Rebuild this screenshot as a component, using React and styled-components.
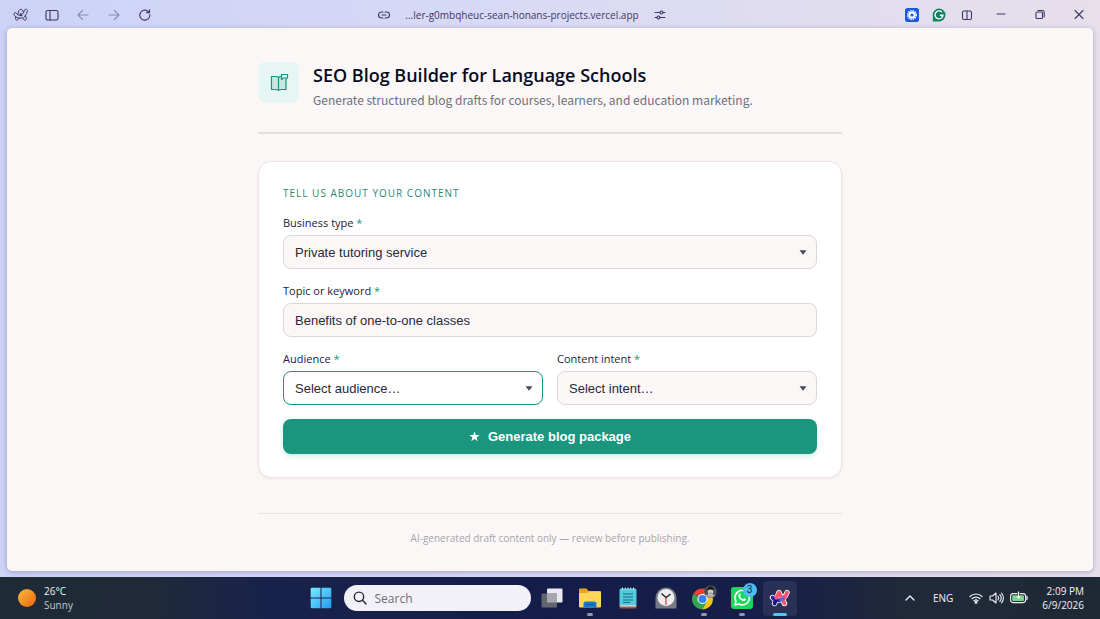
import React from "react";
import styled, { createGlobalStyle, css } from "styled-components";

const GlobalStyle = createGlobalStyle`
  *, *::before, *::after { box-sizing: border-box; }
  body {
    margin: 0;
    font-family: "Open Sans", "Noto Sans", sans-serif;
    color: #10142c;
  }
  button, input, select { font-family: "Liberation Sans", Arial, sans-serif; }
`;

/* ---------- Desktop and browser window ---------- */

const Desktop = styled.div`
  display: flex;
  flex-direction: column;
  min-height: 100vh;
`;

const BrowserWindow = styled.div`
  flex: 1;
  display: flex;
  flex-direction: column;
  padding: 0 7px 6px;
  background: linear-gradient(90deg, #cdd2f6 0%, #d8d9f6 45%, #e2deee 80%, #e7dfea 100%);
`;

const TitleBar = styled.header`
  display: flex;
  align-items: center;
  height: 28px;
  margin: 0 -5px 0 -2px;
  padding-top: 1px;
  color: #3b3965;
`;

const BarGroup = styled.nav`
  display: flex;
  align-items: center;
`;

const BarButton = styled.button`
  display: grid;
  place-items: center;
  width: ${(p) => p.$width || 31}px;
  height: 24px;
  padding: 0;
  border: 0;
  background: none;
  color: inherit;
  opacity: ${(p) => (p.disabled ? 0.45 : 1)};
`;

const Address = styled.div`
  flex: 1;
  display: flex;
  align-items: center;
  justify-content: center;
  gap: 15px;
  padding-right: 14px;
  font-size: 10px;
  line-height: 16px;
  white-space: nowrap;
`;

const Page = styled.main`
  flex: 1;
  display: flex;
  flex-direction: column;
  align-items: center;
  padding: 34px 24px 0;
  border-radius: 5px;
  background: #fbf7f6;
  box-shadow: 0 1px 5px rgba(70, 60, 120, 0.35);
`;

const Column = styled.div`
  width: 100%;
  max-width: 584px;
`;

/* ---------- Page content ---------- */

const Intro = styled.header`
  display: flex;
  gap: 14px;
  padding-bottom: 23px;
  border-bottom: 2px solid #e6e0dc;
`;

const Badge = styled.div`
  display: grid;
  place-items: center;
  width: 41px;
  height: 41px;
  border-radius: 8px;
  background: #e7f5f4;
`;

const Title = styled.h1`
  margin: 0;
  font-size: 18px;
  line-height: 26px;
  font-weight: 600;
  color: #080b1d;
`;

const Subtitle = styled.p`
  margin: 3px 0 0;
  font-family: "Noto Sans CJK SC", "Noto Sans", sans-serif;
  font-size: 12px;
  line-height: 18px;
  color: #6c7080;
`;

const Card = styled.form`
  display: flex;
  flex-direction: column;
  gap: 14px;
  margin-top: 27px;
  padding: 24px 24px 23px;
  border: 1px solid #ece5e4;
  border-radius: 13px;
  background: #ffffff;
  box-shadow: 0 1px 3px rgba(40, 20, 20, 0.06);
`;

const CardTitle = styled.h2`
  margin: 0;
  font-size: 10px;
  line-height: 15px;
  font-weight: 500;
  letter-spacing: 1px;
  text-transform: uppercase;
  color: #2b8773;
`;

const FieldRow = styled.div`
  display: grid;
  grid-template-columns: 1fr 1fr;
  gap: 14px;
`;

const Field = styled.div`
  display: flex;
  flex-direction: column;
  gap: 4px;
`;

const Label = styled.label`
  font-size: 11px;
  line-height: 16px;
  font-weight: 500;
  color: #20243c;
`;

const Required = styled.span`
  color: #1a957e;
`;

const control = css`
  width: 100%;
  height: 34px;
  padding: 0 11px;
  border: 1px solid ${(p) => (p.$active ? "#1a957e" : "#e0d6d4")};
  border-radius: 8px;
  background: ${(p) => (p.$active ? "#ffffff" : "#fbf7f6")};
  font-size: 13px;
  color: #262a3c;
  outline: none;
`;

const TextInput = styled.input`
  ${control}
`;

const Select = styled.select`
  ${control}
  appearance: none;
`;

const SelectBox = styled.div`
  position: relative;
`;

const Caret = styled.svg`
  position: absolute;
  top: 15px;
  right: 10px;
  pointer-events: none;
`;

const SubmitButton = styled.button`
  display: flex;
  align-items: center;
  justify-content: center;
  gap: 8px;
  height: 35px;
  border: 0;
  border-radius: 8px;
  background: #1a957e;
  box-shadow: 0 2px 5px rgba(26, 149, 126, 0.22);
  font-size: 13px;
  font-weight: 700;
  color: #ffffff;
`;

const Note = styled.footer`
  margin: 35px 0 24px;
  padding-top: 16px;
  border-top: 1px solid #e8e2e0;
  font-size: 10px;
  line-height: 16px;
  text-align: center;
  color: #a6a5ae;
`;

/* ---------- Taskbar ---------- */

const Taskbar = styled.footer`
  display: grid;
  grid-template-columns: 1fr auto 1fr;
  align-items: center;
  height: 42px;
  background: linear-gradient(90deg, #1e2a36 0%, #202a38 13%, #18234b 24%, #141d49 50%, #161f48 70%, #202939 82%, #1e2935 100%);
  color: #f2f3f6;
  font-size: 10px;
  line-height: 14px;
`;

const Weather = styled.div`
  display: flex;
  align-items: center;
  gap: 8px;
  padding-left: 18px;
`;

const Muted = styled.div`
  color: #c3c7cd;
`;

const Dock = styled.div`
  display: flex;
  align-items: center;
  gap: 4px;
`;

const AppButton = styled.button`
  position: relative;
  display: grid;
  place-items: center;
  width: 34px;
  height: 35px;
  padding: 0;
  border: 0;
  border-radius: 4px;
  background: ${(p) => (p.$state === "active" ? "rgba(255, 255, 255, 0.08)" : "none")};

  &::after {
    content: "";
    position: absolute;
    bottom: 0;
    display: ${(p) => (p.$state ? "block" : "none")};
    width: ${(p) => (p.$state === "active" ? 14 : 6)}px;
    height: 3px;
    border-radius: 2px;
    background: ${(p) => (p.$state === "active" ? "#55c3f7" : "#9298ac")};
  }
`;

const SearchBox = styled.label`
  display: flex;
  align-items: center;
  gap: 8px;
  width: 187px;
  height: 26px;
  margin-left: 2px;
  padding: 0 9px;
  border-radius: 13px;
  background: #f2f1f8;
`;

const SearchInput = styled.input`
  min-width: 0;
  flex: 1;
  padding: 0;
  border: 0;
  outline: 0;
  background: none;
  font-family: "Open Sans", "Noto Sans", sans-serif;
  font-size: 12px;

  &::placeholder { color: #6e6e76; opacity: 1; }
`;

const Count = styled.span`
  position: absolute;
  top: 2px;
  right: 2px;
  width: 14px;
  height: 14px;
  border-radius: 50%;
  background: #4cbcf2;
  color: #10284a;
  font-size: 10px;
  line-height: 14px;
  text-align: center;
`;

const Tray = styled.div`
  display: flex;
  align-items: center;
  justify-content: flex-end;
  gap: 6px;
  padding-right: 16px;
`;

const Language = styled.span`
  margin: 0 10px 0 12px;
`;

const Clock = styled.div`
  margin-left: 8px;
  text-align: right;
`;

/* ---------- Icons ---------- */

const Line = ({ size = 14, width, children, weight = 1.1, color = "currentColor" }) => (
  <svg width={width || size} height={size} viewBox={`0 0 ${width || size} ${size}`} fill="none" stroke={color}
    strokeWidth={weight} strokeLinecap="round" strokeLinejoin="round" aria-hidden="true">
    {children}
  </svg>
);

const ArcOutline = () => (
  <Line size={14} width={16} weight={1}>
    <path d="M6.2 2.2c.7-1.3 2.5-1.3 3.1 0l1.2 2.5c.4-.7.7-1.4.8-2.2.2-.9 1-1.4 1.9-1.2.9.2 1.4 1 1.2 1.9a10 10 0 0 1-2.2 4.4l1.2 2.5c.7 1.6-1.8 2.9-2.8 1.3l-.9-1.7c-1.2.5-2.5.6-3.8.3l-.7 1.4c-.8 1.5-3.2.5-2.7-1.2l.5-1.2C1.9 8.3 1.2 7.4.9 6.5c-.5-1.6 1.8-2.5 2.6-1.1.2.4.5.7.8 1z" />
    <path d="M4.3 6.4c1.9 1.8 5 .8 6.2-1.7M3 9c1.1.7 2.2.9 2.9 1M7.7 5.5l-1 2 2 .2zM10.7 9.7c.6-.5 1.2-1.2 1.7-2.1" />
  </Line>
);
const SidebarIcon = () => (
  <Line><rect x="1" y="2.5" width="12" height="9.5" rx="1.7" /><path d="M5 2.5V12" /></Line>
);
const BackIcon = () => <Line size={12}><path d="M11 6H1M5.5 1.5 1 6l4.5 4.5" /></Line>;
const ForwardIcon = () => <Line size={12}><path d="M1 6h10M6.5 1.5 11 6l-4.5 4.5" /></Line>;
const ReloadIcon = () => (
  <Line size={12}><path d="M10.8 5.5a5 5 0 1 1-2-3.4l1.5 1.3M10.5.7v2.9H7.6" /></Line>
);
const LinkIcon = () => (
  <Line size={12}><path d="M5 3H3.5a3 3 0 0 0 0 6H5M7 3h1.5a3 3 0 0 1 0 6H7M4 6h4" /></Line>
);
const TuneIcon = () => (
  <Line size={12}><path d="M1 3.5h5M9 3.5h2M1 8.5h2M6 8.5h5" /><circle cx="7.5" cy="3.5" r="1.5" /><circle cx="4.5" cy="8.5" r="1.5" /></Line>
);
const FlowerIcon = () => (
  <svg width="14" height="14" viewBox="0 0 14 14" aria-hidden="true">
    <rect width="14" height="14" rx="2.5" fill="#195bdc" />
    <circle cx="7" cy="7" r="3.6" fill="#fff" />
    <circle cx="7" cy="7" r="4.2" fill="none" stroke="#fff" strokeWidth="1.6" strokeDasharray="1.4 .8" />
    <circle cx="7" cy="7" r="1.6" fill="#195bdc" />
  </svg>
);
const GrammarIcon = () => (
  <svg width="14" height="14" viewBox="0 0 14 14" fill="none" aria-hidden="true">
    <path d="M7 .5A6.5 6.5 0 1 1 7 13.5H.8V7A6.3 6.3 0 0 1 7 .5Z" fill="#0c8463" />
    <path d="M9.8 4A4 4 0 1 0 11 7.3H7.8M11 7.3 9.5 9.4" stroke="#fff" strokeWidth="1.4" />
  </svg>
);
const SplitIcon = () => (
  <Line size={12}><rect x="1.5" y="2" width="9" height="8.5" rx="1.5" /><path d="M6 2v8.5" /></Line>
);
const MinimizeIcon = () => <Line size={12}><path d="M2 5h8" /></Line>;
const RestoreIcon = () => (
  <Line size={12}><rect x="2" y="3" width="6.5" height="6.5" rx="1" /><path d="M4 1.5h4.5A1.8 1.8 0 0 1 10.2 3.2V8" /></Line>
);
const CloseIcon = () => <Line size={12}><path d="m2 1.5 8 8m0-8-8 8" /></Line>;

const BookIcon = () => (
  <Line size={20} color="#1a957e" weight={1.2}>
    <path d="M2.5 3.500h4q2 0 3 1 1-1 3-1h4.500v13h-4.500q-2 0-3 .8-1-.8-3-.8h-4z" fill="#c6e8e1" />
    <path d="M9.500 4.500v12.800" />
    <path d="M12.500 6.500V1.500h6v3.500h-4z" fill="#e7f5f4" />
  </Line>
);
const CaretIcon = () => (
  <Caret width="8" height="5" viewBox="0 0 8 5" aria-hidden="true"><path d="M.5.3h7L4 4.7z" fill="#454861" /></Caret>
);
const StarIcon = () => (
  <svg width="11" height="11" viewBox="0 0 11 11" fill="currentColor" aria-hidden="true">
    <path d="m5.5.3 1.3 3.600 3.900.1-3.100 2.400 1.100 3.800-3.200-2.200-3.200 2.200 1.100-3.800L.3 4l3.900-.1z" />
  </svg>
);
const SunIcon = () => (
  <svg width="18" height="18" viewBox="0 0 18 18" aria-hidden="true">
    <defs><linearGradient id="sun" x1="0" y1="0" x2="1" y2="1"><stop stopColor="#f7bd3b" /><stop offset="1" stopColor="#ee6510" /></linearGradient></defs>
    <circle cx="9" cy="9" r="9" fill="url(#sun)" />
  </svg>
);
const StartIcon = () => (
  <svg width="22" height="22" viewBox="0 0 22 22" aria-hidden="true">
    <defs><linearGradient id="start" x1="0" y1="0" x2="1" y2="1"><stop stopColor="#7deaff" /><stop offset="1" stopColor="#1f9df1" /></linearGradient></defs>
    <path d="M1.500.700h9v9.800H.700v-9zM11.500.700h9l.8.800v9h-9.800zM.700 11.500h9.800v9.800h-9l-.8-.8zM11.500 11.500h9.800v9l-.8.800h-9z" fill="url(#start)" />
  </svg>
);
const SearchIcon = () => (
  <Line size={14} weight={1.4} color="#242433"><circle cx="6" cy="5.8" r="4.7" /><path d="m9.5 9.3 3.5 3.7" /></Line>
);
const TaskViewIcon = () => (
  <svg width="22" height="20" viewBox="0 0 22 20" aria-hidden="true">
    <rect x="6" y=".5" width="15.5" height="14" rx="1" fill="#ebeaf1" />
    <rect x=".5" y="5.5" width="15.5" height="14" rx="1" fill="#63646e" />
    <path d="M6 5.5h10v9H6z" fill="#a7a7ad" />
  </svg>
);
const FolderIcon = () => (
  <svg width="22" height="20" viewBox="0 0 22 20" aria-hidden="true">
    <path d="M0 1.5Q0 .5 1 .5h6.500l2 2.500H20.500q1.500 0 1.500 1.500V19H0z" fill="#e9a51f" />
    <path d="M0 5h8l2-1.500h12V18q0 1.500-1.500 1.500h-19Q0 19.500 0 18z" fill="#ffd65a" />
    <path d="M4.500 19.500v-4q0-2 2-2h9q2 0 2 2v4z" fill="#1679ce" />
    <path d="M7.500 16.500h7" stroke="#075698" strokeLinecap="round" />
  </svg>
);
const NotepadIcon = () => (
  <svg width="18" height="22" viewBox="0 0 18 22" fill="none" aria-hidden="true">
    <path d="M.5 18h17v2q0 1.500-1.500 1.500H2Q.5 21.500.5 20z" fill="#b4533a" />
    <rect x=".5" y="1.500" width="17" height="17.500" rx="1.500" fill="#55c9dc" />
    <path d="M1 19h16" stroke="#eee" />
    <path d="M3.500.5v2.500M6.300.5v2.500M9 .5v2.500M11.700.5v2.500M14.500.5v2.500" stroke="#b5eef3" />
    <path d="M4 7h10M4 10h10M4 13h10M4 15.500h7" stroke="#116f85" strokeWidth="1.2" />
  </svg>
);
const AlarmIcon = () => (
  <svg width="22" height="22" viewBox="0 0 22 22" fill="none" aria-hidden="true">
    <path d="M.5 21.500V11A10.500 10.500 0 0 1 21.500 11v10.500z" fill="#747b85" />
    <circle cx="11" cy="10.500" r="8.500" fill="#ededf0" />
    <path d="M6.500 6.500 11 10.500l4.500-3.500" stroke="#292c35" strokeWidth="1.5" />
    <path d="M11 10.500V18" stroke="#ce3e3e" strokeWidth="1.2" />
  </svg>
);
const ChromeIcon = () => (
  <svg width="26" height="26" viewBox="0 0 26 26" aria-hidden="true">
    <path d="M11.500 14 2.400 8.800A10.500 10.500 0 0 1 20.600 8.800z" fill="#e94235" />
    <path d="M11.500 14V8.800h9.100A10.500 10.500 0 0 1 11.500 24.500z" fill="#fbc116" />
    <path d="m11.500 14 4.500 2.600-4.500 7.900A10.500 10.500 0 0 1 2.400 8.800z" fill="#34a553" />
    <circle cx="11.500" cy="14" r="5.100" fill="#fff" />
    <circle cx="11.500" cy="14" r="4" fill="#3b80ee" />
    <circle cx="19.500" cy="6.500" r="6.300" fill="#4d4e52" />
    <path d="M14.500 10.300q3-1.300 5-1.300t5 1.300a6.300 6.300 0 0 1-10 0z" fill="#aaa9aa" />
    <ellipse cx="19.500" cy="6.500" rx="2.700" ry="3.700" fill="#d0ccc8" />
    <path d="M16.400 5.500q0-4 3.100-4t3.100 4q-3.100-2-6.200 0z" fill="#171719" />
    <path d="M18.300 8.300h2.400" stroke="#55504d" strokeWidth=".7" />
  </svg>
);
const WhatsAppIcon = () => (
  <svg width="22" height="22" viewBox="0 0 22 22" fill="none" aria-hidden="true">
    <rect width="22" height="22" rx="3" fill="#18d95f" />
    <path d="M4 18l1-3.700A7.200 7.200 0 1 1 7.800 17z" stroke="#fff" strokeWidth="1.6" strokeLinejoin="round" />
    <path d="M8 6.800c.8-.6 1.300-.2 1.700 1.100.2.600 0 .9-.6 1.500.7 1.400 1.600 2.200 3 2.800.8-1 1-1.100 1.700-.8 1.700.7 1.400 1.100.8 1.900-1 1.100-2.900.8-4.600-.3C8.300 11.900 6.400 9 8 6.800Z" fill="#fff" />
  </svg>
);
const ArcIcon = () => (
  <svg width="22" height="20" viewBox="0 0 22 20" fill="none" strokeLinecap="round" strokeLinejoin="round" aria-hidden="true">
    <path d="M5.500 15.500 10 4.500l5.500 11M3.500 9.500c3 4 11.500 4 14.500-5" stroke="#fff" strokeWidth="5.4" />
    <path d="M3.500 9.500c3 3.600 8.500 3.800 12-.5" stroke="#2c22b8" strokeWidth="3.6" />
    <path d="M5.500 15.500 6.500 13" stroke="#19147e" strokeWidth="3.8" />
    <path d="M7.300 9.800 10 4.500l5.500 11" stroke="#ff536a" strokeWidth="3.8" />
    <path d="M11.500 12c2-.5 3.400-1.700 4.500-3.300" stroke="#3276ff" strokeWidth="2.8" />
    <path d="M18 4.500q-.6 2.200-1.800 4" stroke="#fb4f77" strokeWidth="3.8" />
  </svg>
);
const ChevronUpIcon = () => <Line size={10} weight={1.3}><path d="m1 7 4-4 4 4" /></Line>;
const WifiIcon = () => (
  <Line size={14} weight={1.2}>
    <path d="M1 5.500a8.500 8.500 0 0 1 12 0M3 7.700a5.700 5.700 0 0 1 8 0M5 9.800a2.900 2.900 0 0 1 4 0" />
    <circle cx="7" cy="11.4" r=".8" fill="currentColor" />
  </Line>
);
const VolumeIcon = () => (
  <Line size={14} width={15} weight={1.1}>
    <path d="M1 5h2.500L7 2v10L3.500 9H1zM9 5.200a3 3 0 0 1 0 3.600M10.800 3.700a5 5 0 0 1 0 6.600M12.500 2.200a7 7 0 0 1 0 9.600" />
  </Line>
);
const BatteryIcon = () => (
  <svg width="18" height="14" viewBox="0 0 18 14" fill="none" aria-hidden="true">
    <rect x=".6" y="2.600" width="15" height="9" rx="2.500" stroke="#eef1ef" strokeWidth="1.1" />
    <rect x="2.200" y="4.200" width="11.800" height="5.800" rx="1.200" fill="#7cd68a" />
    <path d="M17 5.500v3" stroke="#eef1ef" strokeWidth="1.3" strokeLinecap="round" />
    <path d="M8.500 1v5" stroke="#203029" strokeWidth="2.5" />
    <path d="M8.500.5v6M6.800 4.800l1.700 2 1.700-2" stroke="#fff" strokeWidth="1.2" />
  </svg>
);

/* ---------- Parts ---------- */

const FieldLabel = ({ htmlFor, children }) => (
  <Label htmlFor={htmlFor}>{children} <Required>*</Required></Label>
);

const SelectField = ({ id, label, option, active }) => (
  <Field>
    <FieldLabel htmlFor={id}>{label}</FieldLabel>
    <SelectBox>
      <Select id={id} $active={active} defaultValue={option}><option>{option}</option></Select>
      <CaretIcon />
    </SelectBox>
  </Field>
);

const navigation = [
  { name: "Arc menu", Icon: ArcOutline },
  { name: "Toggle sidebar", Icon: SidebarIcon },
  { name: "Back", Icon: BackIcon, disabled: true },
  { name: "Forward", Icon: ForwardIcon, disabled: true },
  { name: "Reload", Icon: ReloadIcon },
];

const windowActions = [
  { name: "Extension", Icon: FlowerIcon, width: 27 },
  { name: "Writing assistant", Icon: GrammarIcon, width: 27 },
  { name: "Split view", Icon: SplitIcon, width: 29 },
  { name: "Minimize", Icon: MinimizeIcon, width: 39 },
  { name: "Restore", Icon: RestoreIcon, width: 39 },
  { name: "Close", Icon: CloseIcon, width: 39 },
];

const apps = [
  { name: "Task view", Icon: TaskViewIcon },
  { name: "File Explorer", Icon: FolderIcon, state: "open" },
  { name: "Notepad", Icon: NotepadIcon },
  { name: "Clock", Icon: AlarmIcon },
  { name: "Chrome", Icon: ChromeIcon, state: "open" },
  { name: "WhatsApp", Icon: WhatsAppIcon, state: "open", count: 3 },
  { name: "Arc", Icon: ArcIcon, state: "active" },
];

export default function App() {
  return (
    <Desktop>
      <GlobalStyle />
      <BrowserWindow>
        <TitleBar>
          <BarGroup aria-label="Navigation">
            {navigation.map(({ name, Icon, disabled }) => (
              <BarButton key={name} aria-label={name} disabled={disabled}><Icon /></BarButton>
            ))}
          </BarGroup>
          <Address>
            <LinkIcon />
            <span>...ler-g0mbqheuc-sean-honans-projects.vercel.app</span>
            <TuneIcon />
          </Address>
          <BarGroup aria-label="Window">
            {windowActions.map(({ name, Icon, width }) => (
              <BarButton key={name} aria-label={name} $width={width}><Icon /></BarButton>
            ))}
          </BarGroup>
        </TitleBar>

        <Page>
          <Column>
            <Intro>
              <Badge><BookIcon /></Badge>
              <div>
                <Title>SEO Blog Builder for Language Schools</Title>
                <Subtitle>Generate structured blog drafts for courses, learners, and education marketing.</Subtitle>
              </div>
            </Intro>

            <Card onSubmit={(event) => event.preventDefault()}>
              <CardTitle>Tell us about your content</CardTitle>
              <SelectField id="business" label="Business type" option="Private tutoring service" />
              <Field>
                <FieldLabel htmlFor="topic">Topic or keyword</FieldLabel>
                <TextInput id="topic" type="text" defaultValue="Benefits of one-to-one classes" />
              </Field>
              <FieldRow>
                <SelectField id="audience" label="Audience" option="Select audience…" active />
                <SelectField id="intent" label="Content intent" option="Select intent…" />
              </FieldRow>
              <SubmitButton type="submit"><StarIcon />Generate blog package</SubmitButton>
            </Card>

            <Note>AI-generated draft content only — review before publishing.</Note>
          </Column>
        </Page>
      </BrowserWindow>

      <Taskbar>
        <Weather>
          <SunIcon />
          <div>
            <div>26°C</div>
            <Muted>Sunny</Muted>
          </div>
        </Weather>
        <Dock>
          <AppButton aria-label="Start"><StartIcon /></AppButton>
          <SearchBox>
            <SearchIcon />
            <SearchInput type="search" placeholder="Search" aria-label="Search" />
          </SearchBox>
          {apps.map(({ name, Icon, state, count }) => (
            <AppButton key={name} aria-label={name} $state={state}>
              <Icon />
              {count && <Count>{count}</Count>}
            </AppButton>
          ))}
        </Dock>
        <Tray>
          <ChevronUpIcon />
          <Language>ENG</Language>
          <WifiIcon />
          <VolumeIcon />
          <BatteryIcon />
          <Clock>
            <div>2:09 PM</div>
            <div>6/9/2026</div>
          </Clock>
        </Tray>
      </Taskbar>
    </Desktop>
  );
}
